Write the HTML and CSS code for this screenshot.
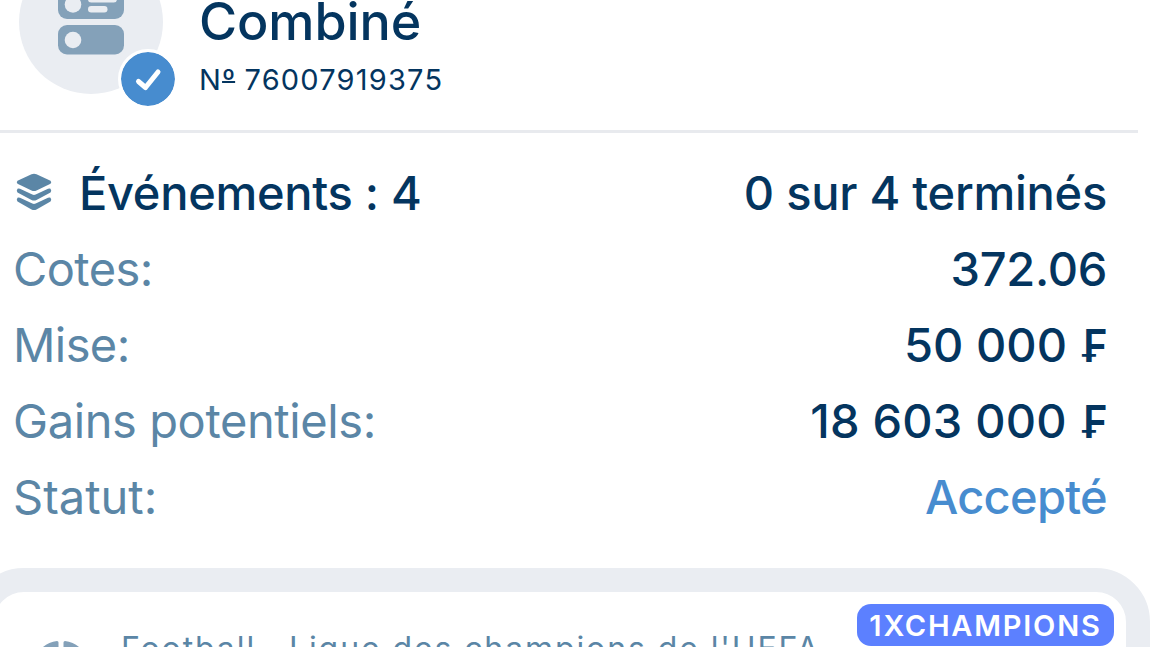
FILE: index.html
```html
<!DOCTYPE html>
<html lang="fr">
<head>
    <meta charset="UTF-8">
    <meta name="viewport" content="width=device-width, initial-scale=1.0">
    <title>Combiné</title>
    <link rel="stylesheet" href="styles.css">
</head>
<body>

    <div class="coupon">
        <div class="header">
            <div class="avatar">
                <svg class="avatar-icon" width="66" height="82" viewBox="0 0 66 82">
                    <rect x="0" y="16" width="66" height="30" rx="9" fill="#84a1b9"/>
                    <circle cx="15" cy="31.500" r="8.300" fill="#eaedf2"/>
                    <rect x="30" y="23" width="29" height="6.500" rx="3.250" fill="#eaedf2"/>
                    <rect x="30" y="33" width="19.500" height="6.500" rx="3.250" fill="#eaedf2"/>
                    <rect x="0" y="52" width="66" height="29.500" rx="9" fill="#84a1b9"/>
                    <circle cx="15" cy="67" r="8.300" fill="#eaedf2"/>
                </svg>
                <div class="check">
                    <svg width="54" height="54" viewBox="0 0 54 54">
                        <path d="M17.500 29.500L24.500 35.500L37 20" fill="none" stroke="#fff" stroke-width="5" stroke-linecap="round" stroke-linejoin="round"/>
                    </svg>
                </div>
            </div>
            <div class="heading">
                <h1>Combiné</h1>
                <p class="number">N<span class="ordinal">º</span> 76007919375</p>
            </div>
        </div>

        <div class="details">
            <div class="row events">
                <span class="events-label">
                    <svg width="36" height="40" viewBox="0 0 36 40" fill="#5b86a6">
                        <path d="M15.500 2.200Q18 1.200 20.500 2.200L34.500 8.700Q36 10.200 34.500 11.700L20.500 18.500Q18 19.500 15.500 18.500L1.500 11.700Q0 10.200 1.500 8.700Z"/>
                        <path d="M1.500 16.700Q2.500 16.100 4 16.800L16.300 22.500Q18 23.300 19.700 22.500L32 16.800Q33.500 16.100 34.500 16.700Q36 18.800 34.500 20.500L20.500 28Q18 29.200 15.500 28L1.500 20.500Q0 18.800 1.500 16.700Z"/>
                        <path d="M1.500 25.700Q2.500 25.100 4 25.800L16.300 31.500Q18 32.300 19.700 31.500L32 25.800Q33.500 25.100 34.500 25.700Q36 27.800 34.500 29.500L20.500 37.500Q18 38.700 15.500 37.500L1.500 29.500Q0 27.800 1.500 25.700Z"/>
                    </svg>
                    <span class="events-text">Événements : 4</span>
                </span>
                <span class="value finished">0 sur 4 terminés</span>
            </div>
            <div class="row">
                <span class="label">Cotes:</span>
                <span class="value odds">372.06</span>
            </div>
            <div class="row">
                <span class="label">Mise:</span>
                <span class="value">50 000 <span class="currency">₣</span></span>
            </div>
            <div class="row">
                <span class="label gains">Gains potentiels:</span>
                <span class="value payout">18 603 000 <span class="currency">₣</span></span>
            </div>
            <div class="row">
                <span class="label status-label">Statut:</span>
                <span class="value status">Accepté</span>
            </div>
        </div>

        <div class="event-card">
            <svg class="ball" width="48" height="48" viewBox="0 0 48 48" fill="#84a1b9">
                <path d="M2 10Q9 1.500 20 0Q21.500 0 21.500 1.500V6L12 14Z"/>
                <path d="M46 10Q39 1.500 28 0Q26.500 0 26.500 1.500V6L36 14Z"/>
            </svg>
            <span class="league">Football . Ligue des champions de l'UEFA</span>
            <span class="badge">1XCHAMPIONS</span>
        </div>
    </div>

</body>
</html>
```
FILE: styles.css
```css
* {
    box-sizing: border-box;
}

body {
    margin: 0;
    height: 647px;
    overflow: hidden;
    background-color: #fff;
    color: #04355f;
    font-family: 'Inter', 'Liberation Sans', sans-serif;
    font-feature-settings: 'calt' 0;
}

h1,
p {
    margin: 0;
}

svg {
    display: block;
    flex-shrink: 0;
}

.coupon {
    height: 647px;
    overflow: hidden;
}

.header {
    display: flex;
    width: 1138px;
    height: 133px;
    padding-left: 19px;
    border-bottom: 3px solid #e8eaee;
}

.avatar {
    position: relative;
    width: 144px;
    height: 144px;
    margin-top: -50px;
    border-radius: 50%;
    background-color: #eaedf2;
}

.avatar-icon {
    margin: 23px auto 0 39px;
}

.check {
    position: absolute;
    left: 99px;
    top: 99px;
    border: 3px solid #fff;
    border-radius: 50%;
    background-color: #478ccf;
    background-clip: padding-box;
}

.heading {
    margin: -10px 0 0 36px;
}

h1 {
    font-size: 52px;
    font-weight: 500;
    line-height: 64px;
    letter-spacing: -0.1px;
}

.number {
    margin-top: 8px;
    font-size: 29px;
    line-height: 36px;
    letter-spacing: 1.2px;
}

.ordinal {
    text-decoration: underline;
    text-decoration-thickness: 2px;
    text-underline-offset: -9px;
    text-decoration-skip-ink: none;
    letter-spacing: 0;
}

.details {
    padding: 21px 43px 0 13px;
}

.row {
    display: flex;
    justify-content: space-between;
    align-items: center;
    height: 76px;
    font-size: 47px;
    line-height: 57px;
    white-space: nowrap;
}

.events-label {
    display: flex;
    align-items: center;
    gap: 27px;
    padding-left: 3px;
    font-weight: 500;
    letter-spacing: -0.3px;
}

.label {
    color: #5b86a6;
    letter-spacing: -0.6px;
}

.gains {
    letter-spacing: -0.4px;
}

.status-label {
    letter-spacing: 0;
}

.value {
    font-weight: 500;
}

.finished {
    letter-spacing: -0.25px;
}

.odds {
    letter-spacing: -0.3px;
}

.payout {
    letter-spacing: 0.2px;
}

.currency {
    display: inline-block;
    font-size: 45px;
    font-weight: 600;
    line-height: 45px;
    letter-spacing: 0;
    transform: scaleX(0.92);
    transform-origin: right;
}

.status {
    color: #478ccf;
    letter-spacing: -0.7px;
}

.event-card {
    display: flex;
    align-items: flex-start;
    width: 1180px;
    height: 200px;
    margin: 34px 0 0 -30px;
    padding: 12px 12px 0 43px;
    border: 24px solid #eaedf2;
    border-radius: 54px;
    white-space: nowrap;
}

.ball {
    margin-top: 37px;
}

.league {
    margin: 26px 0 0 36px;
    color: #5b86a6;
    font-size: 32px;
    line-height: 38px;
    letter-spacing: 1.9px;
}

.badge {
    width: 257px;
    height: 42px;
    margin-left: auto;
    border-radius: 14px;
    background-color: #5c80ff;
    color: #fff;
    font-size: 29px;
    font-weight: 600;
    line-height: 43px;
    letter-spacing: 1.8px;
    text-align: center;
}
```
